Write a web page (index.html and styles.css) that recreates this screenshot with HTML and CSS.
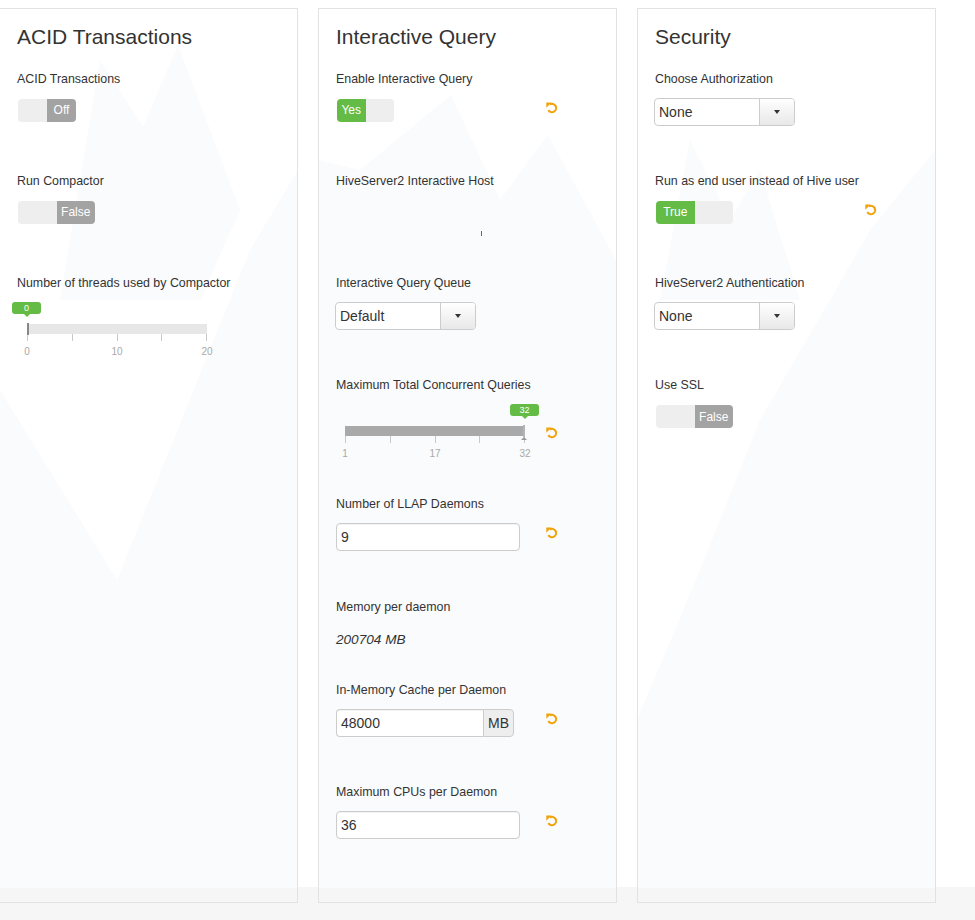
FILE: index.html
```html
<!DOCTYPE html>
<html lang="en">
<head>
<meta charset="utf-8">
<title>Hive Settings</title>
<link rel="stylesheet" href="styles.css">
</head>
<body>
<div class="page">
  <svg class="backdrop" width="975" height="920" viewBox="0 0 975 920" aria-hidden="true">
    <polygon points="0,888 0,390 117,580 250,250 298,170 298,888" />
    <polygon points="60,300 100,60 143,127 178,45 240,210 200,300" />
    <polygon points="318,888 318,160 360,170 451,95 500,200 548,135 616,260 616,888" />
    <polygon points="637,888 637,720 700,570 760,420 830,300 870,230 935,150 935,888" />
    <polygon points="660,300 690,140 730,220 760,170 800,300" />
  </svg>

  <div class="panels">
    <section class="panel">
      <h2 class="panel-title">ACID Transactions</h2>

      <div class="field">
        <div class="field-label">ACID Transactions</div>
        <div class="field-row">
          <div class="switch">
            <span class="sw-half sw-blank sw-w29"></span>
            <span class="sw-half sw-off sw-w29">Off</span>
          </div>
        </div>
      </div>

      <div class="field">
        <div class="field-label">Run Compactor</div>
        <div class="field-row">
          <div class="switch">
            <span class="sw-half sw-blank sw-w38"></span>
            <span class="sw-half sw-off sw-w38">False</span>
          </div>
        </div>
      </div>

      <div class="field">
        <div class="field-label">Number of threads used by Compactor</div>
        <div class="slider-row">
          <div class="slider">
            <span class="slider-badge badge-start">0</span>
            <div class="slider-track track-empty">
              <span class="slider-handle handle-start"></span>
            </div>
            <div class="slider-ticks"><i></i><i></i><i></i><i></i><i></i></div>
            <div class="slider-labels"><span>0</span><span>10</span><span>20</span></div>
          </div>
        </div>
      </div>
    </section>

    <section class="panel">
      <h2 class="panel-title">Interactive Query</h2>

      <div class="field">
        <div class="field-label">Enable Interactive Query</div>
        <div class="field-row with-undo">
          <div class="switch">
            <span class="sw-half sw-on sw-w28">Yes</span>
            <span class="sw-half sw-blank sw-w28"></span>
          </div>
          <svg class="undo" viewBox="0 0 14 14" width="13" height="13"><path d="M5.2 3.6 A4.5 4.5 0 1 1 3.6 9.8" /><polygon points="1.4,1.6 1.4,7.2 7,1.6" /></svg>
        </div>
      </div>

      <div class="field">
        <div class="field-label">HiveServer2 Interactive Host</div>
        <div class="field-row">
          <span class="host-mark"></span>
        </div>
      </div>

      <div class="field">
        <div class="field-label">Interactive Query Queue</div>
        <div class="field-row">
          <div class="select">
            <span class="select-text">Default</span>
            <span class="select-btn"><span class="caret"></span></span>
          </div>
        </div>
      </div>

      <div class="field field-slider">
        <div class="field-label">Maximum Total Concurrent Queries</div>
        <div class="slider-row with-undo">
          <div class="slider slider-mid">
            <span class="slider-badge badge-end">32</span>
            <div class="slider-track track-full">
              <span class="slider-handle handle-end"></span>
            </div>
            <div class="slider-ticks"><i></i><i></i><i></i><i></i><i></i></div>
            <div class="slider-labels"><span>1</span><span>17</span><span>32</span></div>
          </div>
          <svg class="undo undo-slider" viewBox="0 0 14 14" width="13" height="13"><path d="M5.2 3.6 A4.5 4.5 0 1 1 3.6 9.8" /><polygon points="1.4,1.6 1.4,7.2 7,1.6" /></svg>
        </div>
      </div>

      <div class="field">
        <div class="field-label">Number of LLAP Daemons</div>
        <div class="field-row with-undo">
          <div class="text-input">9</div>
          <svg class="undo" viewBox="0 0 14 14" width="13" height="13"><path d="M5.2 3.6 A4.5 4.5 0 1 1 3.6 9.8" /><polygon points="1.4,1.6 1.4,7.2 7,1.6" /></svg>
        </div>
      </div>

      <div class="field field-static">
        <div class="field-label">Memory per daemon</div>
        <div class="field-row">
          <span class="static-value">200704 MB</span>
        </div>
      </div>

      <div class="field">
        <div class="field-label">In-Memory Cache per Daemon</div>
        <div class="field-row with-undo">
          <div class="input-group">
            <span class="ig-input">48000</span>
            <span class="ig-addon">MB</span>
          </div>
          <svg class="undo" viewBox="0 0 14 14" width="13" height="13"><path d="M5.2 3.6 A4.5 4.5 0 1 1 3.6 9.8" /><polygon points="1.4,1.6 1.4,7.2 7,1.6" /></svg>
        </div>
      </div>

      <div class="field">
        <div class="field-label">Maximum CPUs per Daemon</div>
        <div class="field-row with-undo">
          <div class="text-input">36</div>
          <svg class="undo" viewBox="0 0 14 14" width="13" height="13"><path d="M5.2 3.6 A4.5 4.5 0 1 1 3.6 9.8" /><polygon points="1.4,1.6 1.4,7.2 7,1.6" /></svg>
        </div>
      </div>
    </section>

    <section class="panel">
      <h2 class="panel-title">Security</h2>

      <div class="field">
        <div class="field-label">Choose Authorization</div>
        <div class="field-row">
          <div class="select">
            <span class="select-text">None</span>
            <span class="select-btn"><span class="caret"></span></span>
          </div>
        </div>
      </div>

      <div class="field">
        <div class="field-label">Run as end user instead of Hive user</div>
        <div class="field-row with-undo">
          <div class="switch">
            <span class="sw-half sw-on sw-w38">True</span>
            <span class="sw-half sw-blank sw-w38"></span>
          </div>
          <svg class="undo" viewBox="0 0 14 14" width="13" height="13"><path d="M5.2 3.6 A4.5 4.5 0 1 1 3.6 9.8" /><polygon points="1.4,1.6 1.4,7.2 7,1.6" /></svg>
        </div>
      </div>

      <div class="field">
        <div class="field-label">HiveServer2 Authentication</div>
        <div class="field-row">
          <div class="select">
            <span class="select-text">None</span>
            <span class="select-btn"><span class="caret"></span></span>
          </div>
        </div>
      </div>

      <div class="field">
        <div class="field-label">Use SSL</div>
        <div class="field-row">
          <div class="switch">
            <span class="sw-half sw-blank sw-w38"></span>
            <span class="sw-half sw-off sw-w38">False</span>
          </div>
        </div>
      </div>
    </section>
  </div>
</div>
</body>
</html>
```

FILE: styles.css
```css
* { box-sizing: border-box; }

html, body {
  margin: 0;
  padding: 0;
}

body {
  font-family: "Liberation Sans", Arial, "Helvetica Neue", sans-serif;
  color: #333;
  background: linear-gradient(to bottom, #ffffff 0, #ffffff 887px, #f6f6f6 887px, #f6f6f6 100%);
  width: 975px;
  height: 920px;
  overflow: hidden;
}

.page {
  position: relative;
  width: 975px;
  height: 920px;
}

.backdrop {
  position: absolute;
  left: 0;
  top: 0;
  z-index: 0;
}

.backdrop polygon {
  fill: #fafbfc;
}

.panels {
  position: relative;
  z-index: 1;
  display: grid;
  grid-template-columns: 299px 299px 299px;
  column-gap: 20px;
  margin-left: -1px;
  padding-top: 8px;
}

.panel {
  height: 895px;
  border: 1px solid #e2e2e2;
  padding: 15px 17px 0 17px;
}

.panel-title {
  margin: 0 0 19.5px 0;
  font-size: 21px;
  line-height: 26px;
  font-weight: normal;
  color: #333;
}

.field {
  margin-bottom: 46.3px;
}

.field-slider {
  margin-bottom: 35px;
}

.field-static {
  margin-bottom: 27px;
}

.field-label {
  font-size: 12.4px;
  line-height: 18px;
  margin-bottom: 10px;
  color: #333;
}

.field-row {
  display: flex;
  align-items: center;
  height: 28px;
}

.with-undo {
  display: grid;
  grid-template-columns: 209px 13px;
  align-items: center;
}

.with-undo > * {
  justify-self: start;
}

.undo {
  align-self: start;
  margin-top: 3px;
}

.undo path {
  fill: none;
  stroke: #f2a30b;
  stroke-width: 2.3;
}

.undo polygon {
  fill: #f2a30b;
}

/* Toggle switch */
.switch {
  display: inline-flex;
  align-self: flex-start;
  height: 23px;
  margin-top: 1px;
  margin-left: 1px;
  border-radius: 4px;
  overflow: hidden;
  box-shadow: inset 0 0 0 1px rgba(0, 0, 0, 0.03);
}

.sw-half {
  display: flex;
  align-items: center;
  justify-content: center;
  height: 23px;
  font-size: 12px;
  color: #fff;
}

.sw-w28 { width: 28.5px; }
.sw-w29 { width: 29px; }
.sw-w38 { width: 38.5px; }

.sw-blank { background: #eeeeee; }
.sw-off { background: #a3a3a3; }
.sw-on { background: #64bb45; }

/* Select (button group) */
.select {
  display: inline-flex;
  width: 141px;
  height: 28px;
  margin-left: -1px;
  border: 1px solid #cccccc;
  border-radius: 4px;
  overflow: hidden;
  background: #fff;
}

.select-text {
  flex: 1;
  font-size: 14px;
  line-height: 26px;
  padding-left: 4px;
  color: #333;
}

.select-btn {
  width: 35px;
  border-left: 1px solid #cccccc;
  background: linear-gradient(to bottom, #ffffff, #e8e8e8);
  display: flex;
  align-items: center;
  justify-content: center;
}

.caret {
  width: 0;
  height: 0;
  border-top: 4px solid #333;
  border-left: 3.5px solid transparent;
  border-right: 3.5px solid transparent;
}

/* Inputs */
.text-input {
  width: 184px;
  height: 28px;
  border: 1px solid #cccccc;
  border-radius: 4px;
  background: #fff;
  box-shadow: inset 0 1px 1px rgba(0, 0, 0, 0.05);
  font-size: 14px;
  line-height: 26px;
  padding: 0 4px;
  color: #333;
}

.input-group {
  display: inline-flex;
  width: 178px;
  height: 28px;
}

.ig-input {
  width: 147px;
  height: 28px;
  border: 1px solid #cccccc;
  border-right: none;
  border-radius: 4px 0 0 4px;
  background: #fff;
  box-shadow: inset 0 1px 1px rgba(0, 0, 0, 0.05);
  font-size: 14px;
  line-height: 26px;
  padding: 0 4px;
}

.ig-addon {
  width: 31px;
  height: 28px;
  border: 1px solid #cccccc;
  border-radius: 0 4px 4px 0;
  background: #eeeeee;
  font-size: 14px;
  line-height: 26px;
  text-align: center;
  color: #333;
}

.static-value {
  font-size: 13.6px;
  font-style: italic;
  color: #333;
}

.host-mark {
  align-self: flex-start;
  width: 1px;
  height: 5px;
  margin-left: 145px;
  margin-top: 31px;
  background: #666;
}

/* Slider */
.slider-row {
  display: flex;
}

.slider-row.with-undo {
  display: grid;
  grid-template-columns: 209px 13px;
  align-items: start;
}

.undo-slider {
  margin-top: 22px;
}

.slider {
  position: relative;
  width: 180px;
  margin-left: 10px;
  padding-top: 22px;
}

.slider-mid {
  margin-left: 9px;
}

.slider-badge {
  position: absolute;
  top: 0;
  width: 29px;
  height: 12px;
  border-radius: 3px;
  background: #64bb45;
  color: #fff;
  font-size: 9px;
  line-height: 12px;
  text-align: center;
}

.slider-badge::after {
  content: "";
  position: absolute;
  left: 50%;
  bottom: -3px;
  margin-left: -3px;
  border-top: 3px solid #64bb45;
  border-left: 3px solid transparent;
  border-right: 3px solid transparent;
}

.badge-start { left: -15px; }
.badge-end { left: 165px; }

.slider-track {
  position: relative;
  height: 10px;
}

.track-empty { background: #e7e7e7; }
.track-full { background: #a9a9a9; }

.slider-handle {
  position: absolute;
  top: -1px;
  width: 2px;
  height: 12px;
  background: #888;
}

.handle-start { left: 0; }
.handle-end { right: 0; background: #b5b5b5; }

.handle-end::after {
  content: "";
  position: absolute;
  left: -2px;
  top: 12px;
  border-bottom: 3px solid #999;
  border-left: 3px solid transparent;
  border-right: 3px solid transparent;
}

.slider-ticks {
  display: flex;
  justify-content: space-between;
  height: 7px;
}

.slider-ticks i {
  display: block;
  width: 1px;
  height: 7px;
  background: #c8c8c8;
}

.slider-labels {
  display: flex;
  justify-content: space-between;
  margin: 5px -10px 0 -10px;
  height: 12px;
}

.slider-labels span {
  width: 20px;
  text-align: center;
  font-size: 10px;
  line-height: 12px;
  color: #a8a8a8;
}
```
